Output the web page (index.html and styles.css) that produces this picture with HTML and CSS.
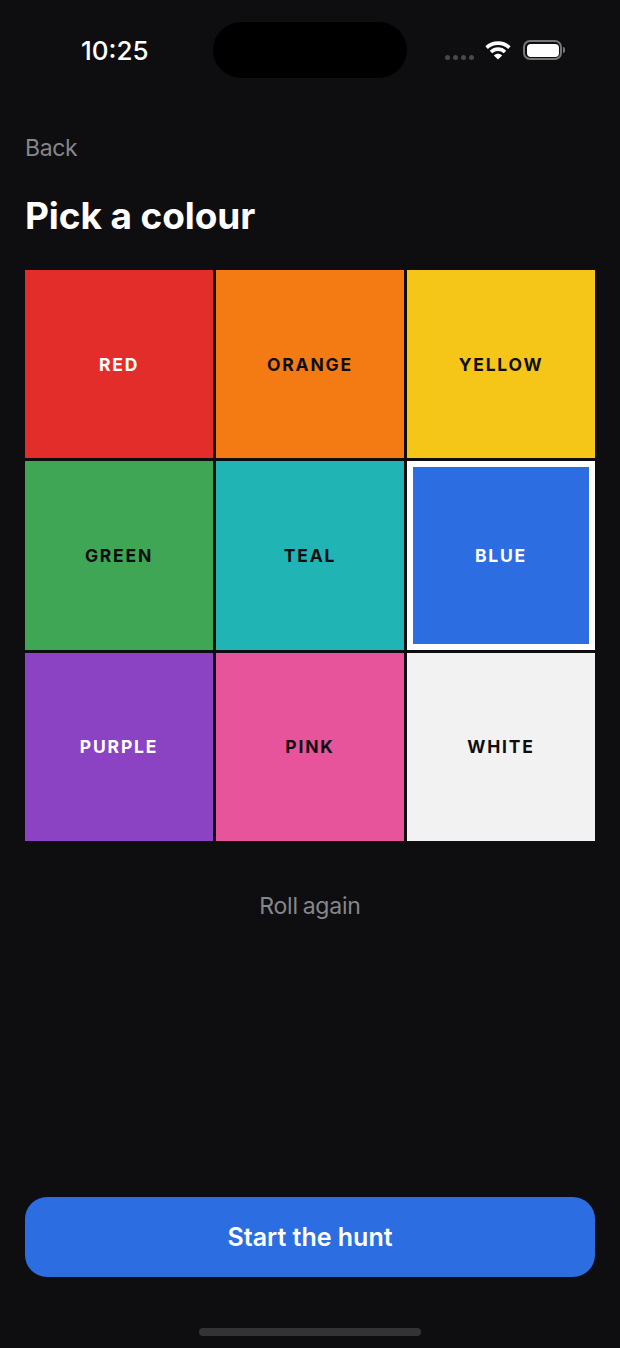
FILE: index.html
```html
<!DOCTYPE html>
<html lang="en">
<head>
  <meta charset="UTF-8">
  <meta name="viewport" content="width=device-width, initial-scale=1.0">
  <title>Pick a colour</title>
  <link rel="stylesheet" href="styles.css">
</head>
<body>
  <div class="screen">
    <div class="status">
      <div class="time">10:25</div>
      <div class="island"></div>
      <div class="status-icons">
        <div class="signal"><i></i><i></i><i></i><i></i></div>
        <svg class="wifi" width="26" height="20" viewBox="0 0 26 20">
          <path d="M1.6 7.6C7.8 1.6 18.2 1.6 24.4 7.6" fill="none" stroke="#fff" stroke-width="3.6"/>
          <path d="M6 12C10 8.2 16 8.2 20 12" fill="none" stroke="#fff" stroke-width="3.6"/>
          <path d="M8.8 15.4C11.4 13.2 14.6 13.2 17.2 15.4L13 19.6Z" fill="#fff"/>
        </svg>
        <div class="battery"><div class="battery-fill"></div></div>
        <div class="battery-cap"></div>
      </div>
    </div>

    <a class="back">Back</a>
    <h1>Pick a colour</h1>

    <div class="grid">
      <div class="tile red">RED</div>
      <div class="tile orange dark">ORANGE</div>
      <div class="tile yellow dark">YELLOW</div>
      <div class="tile green dark">GREEN</div>
      <div class="tile teal dark">TEAL</div>
      <div class="tile blue selected">BLUE</div>
      <div class="tile purple">PURPLE</div>
      <div class="tile pink dark">PINK</div>
      <div class="tile white dark">WHITE</div>
    </div>

    <div class="roll">Roll again</div>

    <button class="start">Start the hunt</button>
    <div class="home-bar"></div>
  </div>
</body>
</html>
```

FILE: styles.css
```css
* {
  box-sizing: border-box;
}

body {
  margin: 0;
  background: #0e0e10;
  font-family: Inter, 'Liberation Sans', sans-serif;
  color: white;
}

.screen {
  height: 1348px;
  padding: 0 25px;
  display: flex;
  flex-direction: column;
  overflow: hidden;
}

.status {
  height: 78px;
  margin-top: 22px;
  display: flex;
  align-items: flex-start;
}

.time {
  width: 188px;
  padding: 13px 0 0 56px;
  font-size: 26px;
  line-height: 31px;
  font-weight: 500;
  white-space: nowrap;
}

.island {
  width: 194px;
  height: 56px;
  border-radius: 28px;
  background: #000;
}

.status-icons {
  display: flex;
  align-items: center;
  height: 56px;
  padding-left: 38px;
}

.signal {
  display: flex;
  gap: 3px;
  margin-top: 14px;
}

.signal i {
  width: 5px;
  height: 5px;
  border-radius: 50%;
  background: #48484a;
}

.wifi {
  margin-left: 11px;
}

.battery {
  width: 39px;
  height: 20px;
  margin-left: 12px;
  padding: 1.5px;
  border: 2px solid #77777a;
  border-radius: 7px;
}

.battery-fill {
  height: 100%;
  background: #fff;
  border-radius: 4px;
}

.battery-cap {
  width: 2px;
  height: 6px;
  margin-left: 1px;
  background: #77777a;
  border-radius: 0 2px 2px 0;
}

.back {
  margin-top: 34px;
  font-size: 23px;
  line-height: 28px;
  color: #86868b;
  letter-spacing: -0.4px;
}

h1 {
  margin: 32px 0 0;
  font-size: 37px;
  line-height: 44px;
  font-weight: 700;
  letter-spacing: -0.1px;
}

.grid {
  margin-top: 32px;
  display: grid;
  grid-template-columns: repeat(3, 188px);
  grid-auto-rows: 188.3px;
  gap: 3px;
}

.tile {
  display: flex;
  align-items: center;
  justify-content: center;
  font-size: 17.5px;
  font-weight: 700;
  letter-spacing: 1.8px;
  color: #fff;
}

.dark { color: #0e0e10; }

.red { background: #e32d2a; }
.orange { background: #f47b14; }
.yellow { background: #f5c518; }
.green { background: #3ea655; }
.teal { background: #20b4b4; }
.blue { background: #2c6de2; }
.purple { background: #8b43c4; }
.pink { background: #e8549c; }
.white { background: #f2f2f2; }

.selected {
  border: 6px solid #fff;
}

.roll {
  margin-top: 51px;
  text-align: center;
  font-size: 23px;
  line-height: 28px;
  color: #86868b;
  letter-spacing: -0.2px;
  word-spacing: -1.5px;
}

.start {
  margin-top: auto;
  height: 80px;
  border: none;
  border-radius: 22px;
  background: #2c6de2;
  color: #fff;
  font-family: inherit;
  font-size: 25px;
  font-weight: 600;
}

.home-bar {
  width: 222px;
  height: 8px;
  margin: 51px auto 12px;
  border-radius: 4px;
  background: #333335;
}
```
